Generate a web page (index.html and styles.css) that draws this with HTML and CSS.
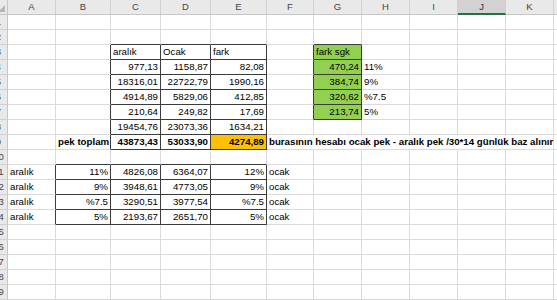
FILE: index.html
```html
<!DOCTYPE html>
<html lang="tr">
<head>
<meta charset="utf-8">
<title>Sheet</title>
<link rel="stylesheet" href="styles.css">
</head>
<body>
<div class="sheet">
  <div class="corner"><span class="tri"></span></div>
  <div class="ch">A</div><div class="ch">B</div><div class="ch">C</div><div class="ch">D</div><div class="ch">E</div><div class="ch">F</div><div class="ch">G</div><div class="ch">H</div><div class="ch">I</div><div class="ch sel">J</div><div class="ch">K</div><div class="ch"></div>

  <div class="rh">1</div><div class="c"></div><div class="c"></div><div class="c"></div><div class="c"></div><div class="c"></div><div class="c"></div><div class="c"></div><div class="c"></div><div class="c"></div><div class="c"></div><div class="c"></div><div class="c"></div>

  <div class="rh">2</div><div class="c"></div><div class="c"></div><div class="c db"></div><div class="c db"></div><div class="c db"></div><div class="c"></div><div class="c db"></div><div class="c"></div><div class="c"></div><div class="c"></div><div class="c"></div><div class="c"></div>

  <div class="rh">3</div><div class="c"></div><div class="c dr"></div><div class="c dr db">aralık</div><div class="c dr db">Ocak</div><div class="c dr db">fark</div><div class="c dr"></div><div class="c g dr db">fark sgk</div><div class="c"></div><div class="c"></div><div class="c"></div><div class="c"></div><div class="c"></div>

  <div class="rh">4</div><div class="c"></div><div class="c dr"></div><div class="c r dr db">977,13</div><div class="c r dr db">1158,87</div><div class="c r dr db">82,08</div><div class="c dr"></div><div class="c r g dr db">470,24</div><div class="c">11%</div><div class="c"></div><div class="c"></div><div class="c"></div><div class="c"></div>

  <div class="rh">5</div><div class="c"></div><div class="c dr"></div><div class="c r dr db">18316,01</div><div class="c r dr db">22722,79</div><div class="c r dr db">1990,16</div><div class="c dr"></div><div class="c r g dr db">384,74</div><div class="c">9%</div><div class="c"></div><div class="c"></div><div class="c"></div><div class="c"></div>

  <div class="rh">6</div><div class="c"></div><div class="c dr"></div><div class="c r dr db">4914,89</div><div class="c r dr db">5829,06</div><div class="c r dr db">412,85</div><div class="c dr"></div><div class="c r g dr db">320,62</div><div class="c">%7.5</div><div class="c"></div><div class="c"></div><div class="c"></div><div class="c"></div>

  <div class="rh">7</div><div class="c"></div><div class="c dr"></div><div class="c r dr db">210,64</div><div class="c r dr db">249,82</div><div class="c r dr db">17,69</div><div class="c dr"></div><div class="c r g dr db">213,74</div><div class="c">5%</div><div class="c"></div><div class="c"></div><div class="c"></div><div class="c"></div>

  <div class="rh">8</div><div class="c"></div><div class="c dr"></div><div class="c r dr db">19454,76</div><div class="c r dr db">23073,36</div><div class="c r dr db">1634,21</div><div class="c"></div><div class="c"></div><div class="c"></div><div class="c"></div><div class="c"></div><div class="c"></div><div class="c"></div>

  <div class="rh">9</div><div class="c"></div><div class="c r b dr">pek toplam</div><div class="c r b dr db">43873,43</div><div class="c r b dr db">53033,90</div><div class="c r b o dr db">4274,89</div><div class="c b span6">burasının hesabı ocak pek - aralık pek /30*14 günlük baz alınır</div><div class="c"></div>

  <div class="rh">10</div><div class="c"></div><div class="c db"></div><div class="c db"></div><div class="c db"></div><div class="c db"></div><div class="c"></div><div class="c"></div><div class="c"></div><div class="c"></div><div class="c"></div><div class="c"></div><div class="c"></div>

  <div class="rh">11</div><div class="c dr">aralık</div><div class="c r dr db">11%</div><div class="c r dr db">4826,08</div><div class="c r dr db">6364,07</div><div class="c r dr db">12%</div><div class="c">ocak</div><div class="c"></div><div class="c"></div><div class="c"></div><div class="c"></div><div class="c"></div><div class="c"></div>

  <div class="rh">12</div><div class="c dr">aralık</div><div class="c r dr db">9%</div><div class="c r dr db">3948,61</div><div class="c r dr db">4773,05</div><div class="c r dr db">9%</div><div class="c">ocak</div><div class="c"></div><div class="c"></div><div class="c"></div><div class="c"></div><div class="c"></div><div class="c"></div>

  <div class="rh">13</div><div class="c dr">aralık</div><div class="c r dr db">%7.5</div><div class="c r dr db">3290,51</div><div class="c r dr db">3977,54</div><div class="c r dr db">%7.5</div><div class="c">ocak</div><div class="c"></div><div class="c"></div><div class="c"></div><div class="c"></div><div class="c"></div><div class="c"></div>

  <div class="rh">14</div><div class="c dr">aralık</div><div class="c r dr db">5%</div><div class="c r dr db">2193,67</div><div class="c r dr db">2651,70</div><div class="c r dr db">5%</div><div class="c">ocak</div><div class="c"></div><div class="c"></div><div class="c"></div><div class="c"></div><div class="c"></div><div class="c"></div>

  <div class="rh">15</div><div class="c"></div><div class="c"></div><div class="c"></div><div class="c"></div><div class="c"></div><div class="c"></div><div class="c"></div><div class="c"></div><div class="c"></div><div class="c"></div><div class="c"></div><div class="c"></div>

  <div class="rh">16</div><div class="c"></div><div class="c"></div><div class="c"></div><div class="c"></div><div class="c"></div><div class="c"></div><div class="c"></div><div class="c"></div><div class="c"></div><div class="c"></div><div class="c"></div><div class="c"></div>

  <div class="rh">17</div><div class="c"></div><div class="c"></div><div class="c"></div><div class="c"></div><div class="c"></div><div class="c"></div><div class="c"></div><div class="c"></div><div class="c"></div><div class="c"></div><div class="c"></div><div class="c"></div>

  <div class="rh">18</div><div class="c"></div><div class="c"></div><div class="c"></div><div class="c"></div><div class="c"></div><div class="c"></div><div class="c"></div><div class="c"></div><div class="c"></div><div class="c"></div><div class="c"></div><div class="c"></div>

  <div class="rh">19</div><div class="c"></div><div class="c"></div><div class="c"></div><div class="c"></div><div class="c"></div><div class="c"></div><div class="c"></div><div class="c"></div><div class="c"></div><div class="c"></div><div class="c"></div><div class="c"></div>
</div>
</body>
</html>
```
FILE: styles.css
```css
html, body {
  margin: 0;
  padding: 0;
  background: #ffffff;
}
body {
  width: 557px;
  height: 300px;
  overflow: hidden;
  font-family: "Liberation Sans", Arial, sans-serif;
  color: #000;
}
.sheet {
  display: grid;
  grid-template-columns: 18px 48px 55px 50px 50px 56px 47px 48px 48px 48px 48px 48px 48px;
  grid-auto-rows: 15px;
  margin-left: -10px;
  width: max-content;
}
.corner {
  position: relative;
  background: #e9e9e9;
  border-right: 1px solid #c6c6c6;
  border-bottom: 1px solid #c6c6c6;
  box-sizing: border-box;
}
.tri {
  position: absolute;
  right: 2px;
  bottom: 2px;
  width: 0;
  height: 0;
  border-left: 7px solid transparent;
  border-bottom: 7px solid #b7b7b7;
}
.ch {
  background: #e9e9e9;
  border-right: 1px solid #d0d0d0;
  border-bottom: 1px solid #c6c6c6;
  box-sizing: border-box;
  font-size: 9.5px;
  color: #444;
  text-align: center;
  line-height: 14px;
}
.ch.sel {
  background: #d2d2d2;
  border-bottom: 2px solid #217346;
  line-height: 13px;
  color: #333;
}
.rh {
  background: #e9e9e9;
  border-right: 1px solid #c6c6c6;
  border-bottom: 1px solid #d0d0d0;
  box-sizing: border-box;
  font-size: 9.5px;
  color: #444;
  text-align: center;
  line-height: 14px;
}
.c {
  box-sizing: border-box;
  border-right: 1px solid #dadada;
  border-bottom: 1px solid #dadada;
  font-size: 9.7px;
  line-height: 14px;
  padding: 0 2px;
  white-space: nowrap;
  overflow: hidden;
}
.r { text-align: right; }
.b { font-weight: bold; }
.dr { border-right-color: #3c3c3c; }
.db { border-bottom-color: #3c3c3c; }
.g { background: #92d050; }
.o { background: #ffc000; }
.span6 {
  grid-column: span 6;
  overflow: visible;
}
```
